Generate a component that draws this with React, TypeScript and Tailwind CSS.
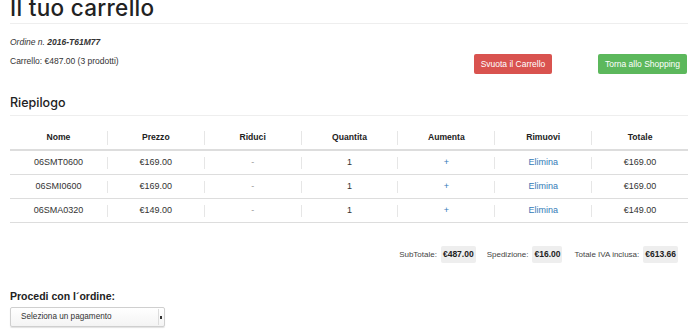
import React from "react";

const rows = [
  { nome: "06SMT0600", prezzo: "€169.00", q: "1", tot: "€169.00" },
  { nome: "06SMI0600", prezzo: "€169.00", q: "1", tot: "€169.00" },
  { nome: "06SMA0320", prezzo: "€149.00", q: "1", tot: "€149.00" },
];

function Cell({ children, first, h = "h-[12px]", className = "" }: { children: React.ReactNode; first?: boolean; h?: string; className?: string }) {
  return (
    <div className="flex-1 flex items-center">
      <div className={`w-full flex items-center justify-center ${h} ${first ? "" : "border-l border-[#e6e6e6]"} ${className}`}>
        {children}
      </div>
    </div>
  );
}

export default function App() {
  return (
    <div className="w-[700px] h-[336px] overflow-hidden bg-white text-[#333]" style={{ fontFamily: '"Liberation Sans", Arial, sans-serif' }}>
      <div className="pl-[10px] pr-[12px]">
        <div className="border-b border-[#eeeeee] h-[24px] flex items-end">
          <h1 className="text-[22.5px] leading-none font-medium text-[#222] mb-[4px] tracking-[0.3px]" style={{ fontFamily: '"Inter", "Noto Sans", sans-serif' }}>
            Il tuo carrello
          </h1>
        </div>
        <div className="flex">
          <div className="flex-1">
            <div className="text-[8.5px] italic mt-[13px] leading-[10px]">
              Ordine n. <b>2016-T61M77</b>
            </div>
            <div className="text-[8.5px] mt-[9px] leading-[10px]">Carrello: €487.00 (3 prodotti)</div>
          </div>
          <div className="flex gap-[46px] mt-[30px] mr-[1px]">
            <button className="h-[20px] w-[78px] rounded-[2px] bg-[#d9534f] text-white text-[8.5px]">Svuota il Carrello</button>
            <button className="h-[20px] w-[89px] rounded-[2px] bg-[#5cb85c] text-white text-[8.5px]">Torna allo Shopping</button>
          </div>
        </div>
        <div className="mt-[22px] border-b border-[#eeeeee] pb-[5px]">
          <h3 className="text-[12.5px] font-medium text-[#222] leading-[14px]" style={{ fontFamily: '"Inter", "Noto Sans", sans-serif' }}>
            Riepilogo
          </h3>
        </div>
        <div className="mt-[10px] text-[9px]">
          <div className="flex h-[25px] border-b-2 border-[#dddddd] font-bold text-[#222] text-[8.6px]">
            <Cell first h="h-[14px]">Nome</Cell>
            <Cell h="h-[14px]">Prezzo</Cell>
            <Cell h="h-[14px]">Riduci</Cell>
            <Cell h="h-[14px]">Quantita</Cell>
            <Cell h="h-[14px]">Aumenta</Cell>
            <Cell h="h-[14px]">Rimuovi</Cell>
            <Cell h="h-[14px]">Totale</Cell>
          </div>
          {rows.map((r) => (
            <div key={r.nome} className="flex h-[24px] border-b border-[#dddddd] text-[#333]">
              <Cell first>{r.nome}</Cell>
              <Cell>{r.prezzo}</Cell>
              <Cell className="text-[#999]">-</Cell>
              <Cell>{r.q}</Cell>
              <Cell className="text-[#337ab7]">+</Cell>
              <Cell className="text-[#337ab7]">Elimina</Cell>
              <Cell>{r.tot}</Cell>
            </div>
          ))}
        </div>
        <div className="flex justify-end items-center mt-[23px] pr-[10px] text-[8px] text-[#444]">
          <span>SubTotale:</span>
          <span className="ml-[4px] bg-[#eeeeee] rounded-[2px] h-[17px] px-[2px] flex items-center font-bold text-[8.5px] text-[#222]">€487.00</span>
          <span className="ml-[11px]">Spedizione:</span>
          <span className="ml-[4px] bg-[#eeeeee] rounded-[2px] h-[17px] px-[2px] flex items-center font-bold text-[8.5px] text-[#222]">€16.00</span>
          <span className="ml-[12px]">Totale IVA inclusa:</span>
          <span className="ml-[4px] bg-[#eeeeee] rounded-[2px] h-[17px] px-[2px] flex items-center font-bold text-[8.5px] text-[#222]">€613.66</span>
        </div>
        <div className="mt-[27px] text-[10.5px] font-bold text-[#222] leading-[13px]">Procedi con l´ordine:</div>
        <div className="mt-[4px] w-[155px] h-[20px] rounded-[2px] border border-[#cfcfcf] shadow-[0_1px_1px_rgba(0,0,0,0.12)] bg-gradient-to-b from-white to-[#f4f4f4] flex items-center justify-between pl-[10px] pr-[2px] text-[8.2px] text-[#333]">
          <span>Seleziona un pagamento</span>
          <span className="h-[16px] w-[4px] border-l border-[#ddd] flex items-center justify-end">
            <span className="block w-[2px] h-[3px] bg-[#333]"></span>
          </span>
        </div>
      </div>
    </div>
  );
}
